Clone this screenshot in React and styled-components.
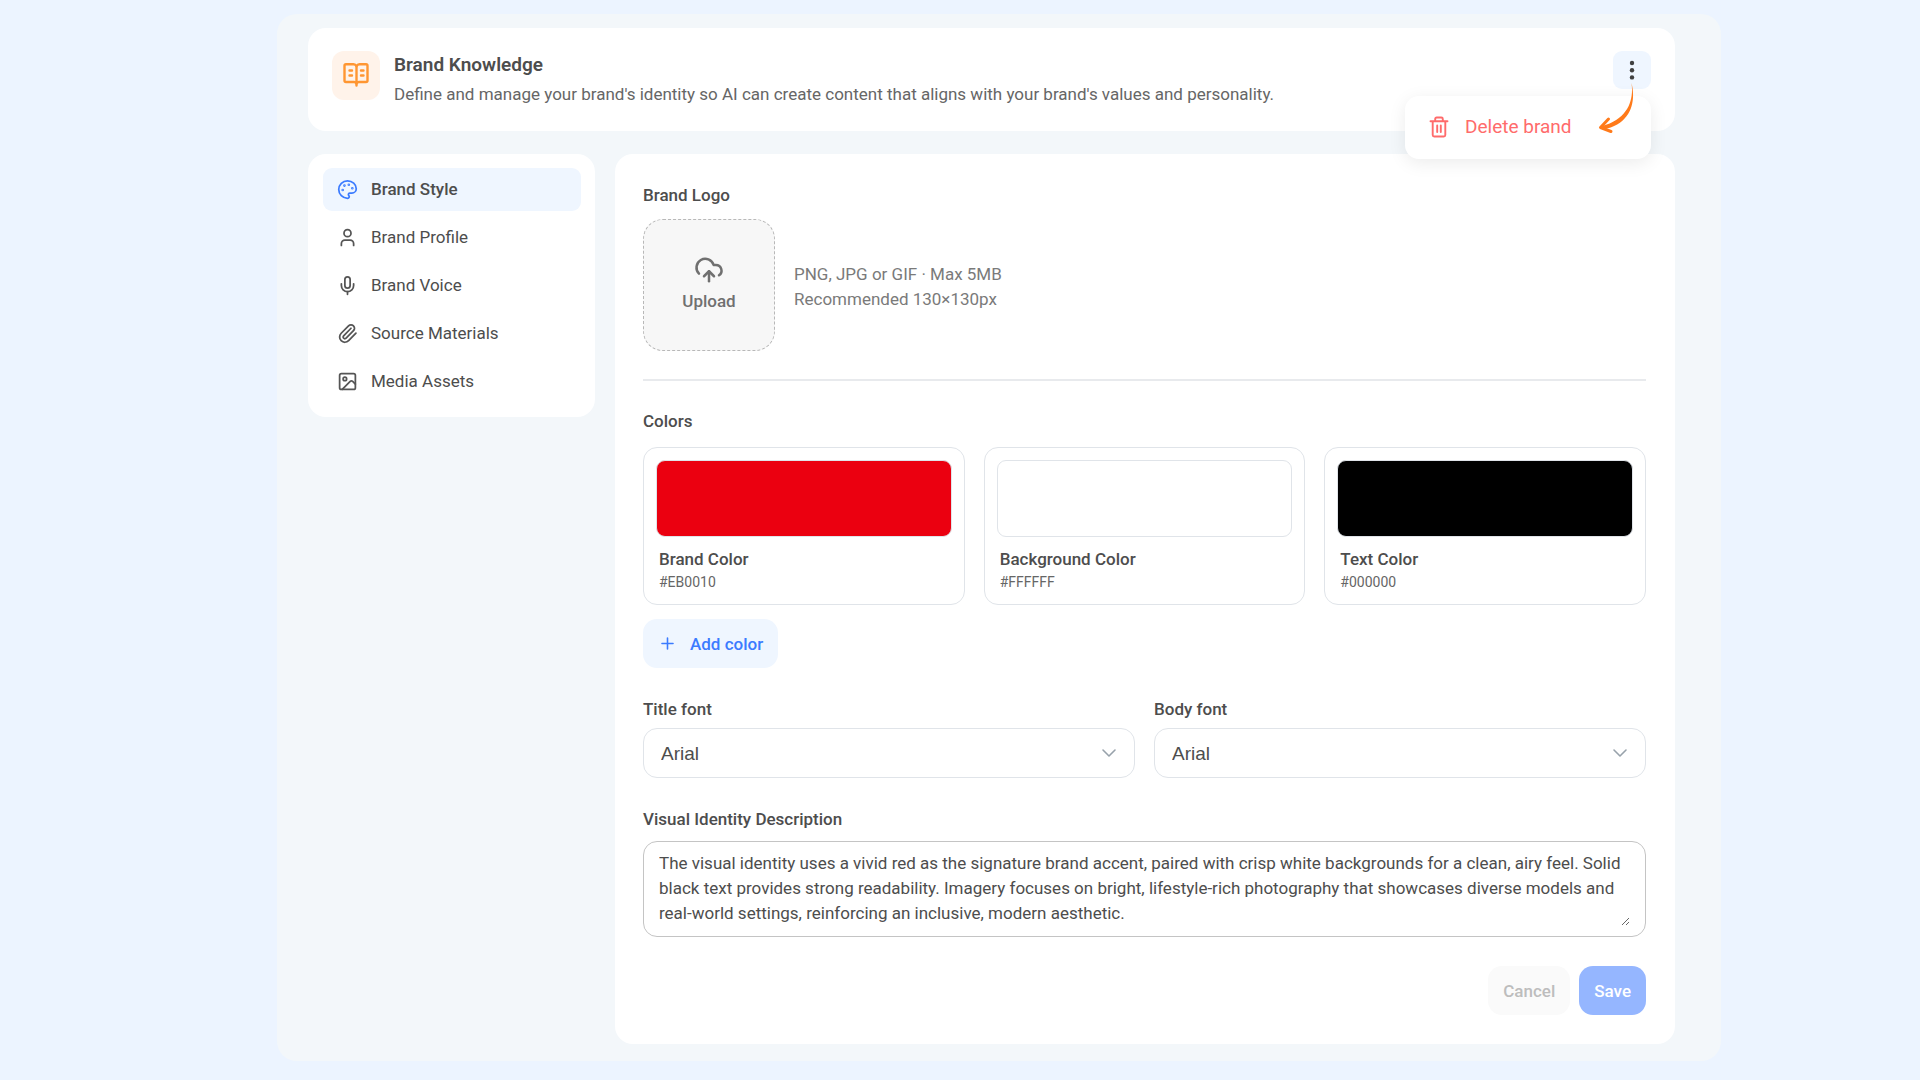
import { useState } from "react";
import styled, { createGlobalStyle } from "styled-components";
import {
  ChevronDown,
  CloudUpload,
  Image,
  Mic,
  Palette,
  Paperclip,
  Plus,
  User,
} from "lucide-react";

const GlobalStyle = createGlobalStyle`
  *, *::before, *::after {
    box-sizing: border-box;
  }
  body {
    margin: 0;
    background: #ecf4ff;
    color: #4d4d4d;
    font-family: Roboto, "Liberation Sans", sans-serif;
    font-size: 17px;
  }
  h1, h2, p {
    margin: 0;
  }
  button, select, textarea {
    font: inherit;
    color: inherit;
  }
  svg {
    display: block;
    flex-shrink: 0;
  }
`;

const Page = styled.div`
  min-height: 100vh;
  padding: 14px 199px 19px 277px;
`;

const Shell = styled.div`
  display: flex;
  flex-direction: column;
  gap: 23px;
  padding: 14px 46px 17px 31px;
  border-radius: 20px;
  background: #f3f7fa;
`;

const Card = styled.div`
  background: #fff;
  border-radius: 18px;
`;

const Header = styled(Card)`
  display: flex;
  align-items: flex-start;
  padding: 23px 24px 24px;
`;

const HeaderIcon = styled.div`
  display: flex;
  align-items: flex-start;
  justify-content: center;
  width: 48px;
  height: 49px;
  padding-top: 11px;
  border-radius: 12px;
  background: #fff3ea;
  color: #ff9632;
`;

const HeaderText = styled.div`
  flex: 1;
  padding-left: 14px;
`;

const Title = styled.h1`
  font-size: 19px;
  font-weight: 600;
  line-height: 28px;
`;

const Description = styled.p`
  padding-top: 2px;
  margin-bottom: -1px;
  color: #666;
  line-height: 27px;
`;

const MenuAnchor = styled.div`
  position: relative;
`;

const MenuButton = styled.button`
  display: flex;
  align-items: center;
  justify-content: center;
  width: 38px;
  height: 38px;
  padding: 0;
  border: none;
  border-radius: 9px;
  background: #eff6ff;
  color: #404040;
  cursor: pointer;
`;

const Menu = styled.div`
  position: absolute;
  top: 45px;
  right: 0;
  z-index: 1;
  width: 246px;
  padding: 7px 8px 9px;
  border-radius: 14px;
  background: #fff;
  box-shadow: 0 4px 18px rgba(0, 0, 0, 0.08);
`;

const MenuItem = styled.button`
  display: flex;
  align-items: center;
  gap: 16px;
  width: 100%;
  height: 47px;
  padding: 0 16px;
  border: none;
  background: none;
  color: #ff6b6b;
  font-size: 19px;
  cursor: pointer;
`;

const Arrow = styled.svg`
  position: absolute;
  top: 32px;
  right: 16px;
  z-index: 2;
  pointer-events: none;
`;

const Columns = styled.div`
  display: grid;
  grid-template-columns: 287px minmax(0, 1fr);
  align-items: start;
  gap: 20px;
`;

const Sidebar = styled(Card).attrs({ as: "nav" })`
  display: flex;
  flex-direction: column;
  gap: 5px;
  padding: 14px 14px 14px 15px;
`;

const NavItem = styled.a`
  display: flex;
  align-items: center;
  gap: 13px;
  height: 43px;
  padding: 0 14px 1px;
  border-radius: 9px;
  background: ${(p) => (p.$active ? "#eff6ff" : "transparent")};
  font-weight: ${(p) => (p.$active ? 500 : 400)};
  color: #4d4d4d;
  text-decoration: none;

  svg {
    color: ${(p) => (p.$active ? "#3b7bff" : "#555")};
  }
`;

const Panel = styled(Card).attrs({ as: "main" })`
  padding: 29px 29px 29px 28px;
`;

const SectionTitle = styled.h2`
  font-size: 17px;
  font-weight: 500;
  line-height: 24px;
`;

const LogoRow = styled.div`
  display: flex;
  align-items: center;
  gap: 19px;
  padding: 12px 0 28px;
  border-bottom: 2px solid #e8eaed;
  margin-bottom: 28px;
`;

const UploadButton = styled.button`
  display: flex;
  flex-direction: column;
  align-items: center;
  justify-content: center;
  gap: 6px;
  width: 132px;
  height: 132px;
  padding: 0 0 5px;
  border: 1px dashed #b8b8b8;
  border-radius: 20px;
  background: #f7f7f7;
  color: #707070;
  font-weight: 500;
  cursor: pointer;
`;

const Hint = styled.p`
  padding-top: 3px;
  color: #7a7a7a;
  line-height: 25px;
`;

const Swatches = styled.div`
  display: grid;
  grid-template-columns: repeat(3, minmax(0, 1fr));
  gap: 19px;
  padding: 14px 0;
`;

const SwatchCard = styled.div`
  padding: 12px 12px 10px;
  border: 1px solid #e0e4e9;
  border-radius: 14px;
`;

const Swatch = styled.div`
  height: 77px;
  margin-bottom: 11px;
  border: 1px solid #e0e4e9;
  border-radius: 9px;
  background: ${(p) => p.$color};
`;

const SwatchName = styled.p`
  padding-left: 3px;
  font-weight: 500;
  line-height: 22px;
`;

const SwatchHex = styled.p`
  padding-left: 3px;
  color: #666;
  font-size: 14px;
  line-height: 24px;
`;

const Button = styled.button`
  display: flex;
  align-items: center;
  height: 49px;
  padding: 0 15px;
  border: none;
  border-radius: 14px;
  font-weight: 500;
  cursor: pointer;
`;

const AddButton = styled(Button)`
  gap: 13px;
  background: #eff6ff;
  color: #3b7bff;
`;

const CancelButton = styled(Button)`
  background: #fafafa;
  color: #bdbdbd;
`;

const SaveButton = styled(Button)`
  background: #95b6ff;
  color: #fff;
`;

const Fonts = styled.div`
  display: grid;
  grid-template-columns: repeat(2, minmax(0, 1fr));
  gap: 19px;
  padding: 29px 0;
`;

const Label = styled.label`
  display: block;
  font-weight: 500;
  line-height: 24px;
`;

const SelectBox = styled.div`
  display: grid;
  align-items: center;
  padding-top: 7px;

  select,
  svg {
    grid-area: 1 / 1;
  }

  svg {
    justify-self: end;
    margin-right: 14px;
    color: #98a2ab;
    pointer-events: none;
  }
`;

const Select = styled.select`
  appearance: none;
  width: 100%;
  height: 50px;
  padding: 0 17px;
  border: 1px solid #e0e4e9;
  border-radius: 14px;
  background: #fff;
  font-family: "Liberation Sans", Arial, sans-serif;
  font-size: 19px;
`;

const TextBox = styled.div`
  margin: 10px 0 29px;
  padding: 9px 15px 10px;
  border: 1px solid #c4c4c4;
  border-radius: 14px;
`;

const TextArea = styled.textarea`
  display: block;
  width: 100%;
  height: 75px;
  padding: 0;
  border: none;
  outline: none;
  background: none;
  line-height: 25px;
  resize: vertical;
`;

const Actions = styled.div`
  display: flex;
  justify-content: flex-end;
  gap: 9px;
`;

const navItems = [
  { label: "Brand Style", icon: Palette },
  { label: "Brand Profile", icon: User },
  { label: "Brand Voice", icon: Mic },
  { label: "Source Materials", icon: Paperclip },
  { label: "Media Assets", icon: Image },
];

const colors = [
  { name: "Brand Color", hex: "#EB0010" },
  { name: "Background Color", hex: "#FFFFFF" },
  { name: "Text Color", hex: "#000000" },
];

const fonts = ["Arial", "Georgia", "Verdana"];

function BookIcon() {
  return (
    <svg
      width="26"
      height="26"
      viewBox="0 0 26 26"
      fill="none"
      stroke="currentColor"
      strokeWidth="2.4"
      strokeLinecap="round"
      strokeLinejoin="round"
    >
      <path d="M13.500 4.200Q12.500 2.200 10.500 2.200H3Q1.500 2.200 1.500 3.700V18.500Q1.500 20 3 20H11Q13 20 13.500 21.500Q14 20 16 20H23Q24.500 20 24.500 18.500V3.700Q24.500 2.200 23 2.200H16.500Q14.500 2.200 13.500 4.200Z" />
      <path d="M13.500 4.500V23.500M6.500 8.500H9M6.500 13.500H9M18 8.500H20.500M18 13.500H20.500" />
    </svg>
  );
}

function DotsIcon() {
  return (
    <svg width="24" height="24" viewBox="0 0 24 24" fill="currentColor">
      <circle cx="12" cy="5" r="2.200" />
      <circle cx="12" cy="12.200" r="2.200" />
      <circle cx="12" cy="19.400" r="2.200" />
    </svg>
  );
}

function TrashIcon() {
  return (
    <svg
      width="20"
      height="22"
      viewBox="0 0 20 22"
      fill="none"
      stroke="currentColor"
      strokeWidth="1.9"
      strokeLinecap="round"
      strokeLinejoin="round"
    >
      <path d="M1.500 5.200H18.500M6.200 5V3Q6.200 1.500 7.700 1.500H12.300Q13.800 1.500 13.800 3V5M3.700 5.200V19Q3.700 20.500 5.200 20.500H14.800Q16.300 20.500 16.300 19V5.200M8.200 9.500V16M11.800 9.500V16" />
    </svg>
  );
}

function MenuArrow() {
  return (
    <Arrow width="38" height="54" viewBox="0 0 38 54" fill="#ff7a1a" aria-hidden="true">
      <path d="M34.500 0C37 17 31 36 5 43L6 46.500C35 41 39 18 34.500 0Z" />
      <path
        d="M11.500 36L3.500 44.500L14 48.500"
        fill="none"
        stroke="#ff7a1a"
        strokeWidth="3"
        strokeLinecap="round"
        strokeLinejoin="round"
      />
    </Arrow>
  );
}

function FontField({ id, label }) {
  return (
    <div>
      <Label htmlFor={id}>{label}</Label>
      <SelectBox>
        <Select id={id} defaultValue="Arial">
          {fonts.map((font) => (
            <option key={font}>{font}</option>
          ))}
        </Select>
        <ChevronDown size={24} strokeWidth={1.6} />
      </SelectBox>
    </div>
  );
}

export default function App() {
  const [menuOpen, setMenuOpen] = useState(true);

  return (
    <>
      <GlobalStyle />
      <Page>
        <Shell>
          <Header as="header">
            <HeaderIcon>
              <BookIcon />
            </HeaderIcon>
            <HeaderText>
              <Title>Brand Knowledge</Title>
              <Description>
                Define and manage your brand's identity so AI can create content that aligns with
                your brand's values and personality.
              </Description>
            </HeaderText>
            <MenuAnchor>
              <MenuButton
                type="button"
                aria-label="More options"
                aria-expanded={menuOpen}
                onClick={() => setMenuOpen(!menuOpen)}
              >
                <DotsIcon />
              </MenuButton>
              {menuOpen && (
                <>
                  <Menu>
                    <MenuItem type="button">
                      <TrashIcon />
                      Delete brand
                    </MenuItem>
                  </Menu>
                  <MenuArrow />
                </>
              )}
            </MenuAnchor>
          </Header>

          <Columns>
            <Sidebar>
              {navItems.map(({ label, icon: Icon }, i) => (
                <NavItem key={label} href="#" $active={i === 0}>
                  <Icon size={21} strokeWidth={2} />
                  {label}
                </NavItem>
              ))}
            </Sidebar>

            <Panel>
              <SectionTitle>Brand Logo</SectionTitle>
              <LogoRow>
                <UploadButton type="button">
                  <CloudUpload size={30} strokeWidth={2} />
                  Upload
                </UploadButton>
                <Hint>
                  PNG, JPG or GIF · Max 5MB
                  <br />
                  Recommended 130×130px
                </Hint>
              </LogoRow>

              <SectionTitle>Colors</SectionTitle>
              <Swatches>
                {colors.map((color) => (
                  <SwatchCard key={color.name}>
                    <Swatch $color={color.hex} />
                    <SwatchName>{color.name}</SwatchName>
                    <SwatchHex>{color.hex}</SwatchHex>
                  </SwatchCard>
                ))}
              </Swatches>
              <AddButton type="button">
                <Plus size={19} strokeWidth={2} />
                Add color
              </AddButton>

              <Fonts>
                <FontField id="title-font" label="Title font" />
                <FontField id="body-font" label="Body font" />
              </Fonts>

              <Label htmlFor="visual-identity">Visual Identity Description</Label>
              <TextBox>
                <TextArea
                  id="visual-identity"
                  defaultValue="The visual identity uses a vivid red as the signature brand accent, paired with crisp white backgrounds for a clean, airy feel. Solid black text provides strong readability. Imagery focuses on bright, lifestyle-rich photography that showcases diverse models and real-world settings, reinforcing an inclusive, modern aesthetic."
                />
              </TextBox>

              <Actions>
                <CancelButton type="button">Cancel</CancelButton>
                <SaveButton type="button">Save</SaveButton>
              </Actions>
            </Panel>
          </Columns>
        </Shell>
      </Page>
    </>
  );
}
